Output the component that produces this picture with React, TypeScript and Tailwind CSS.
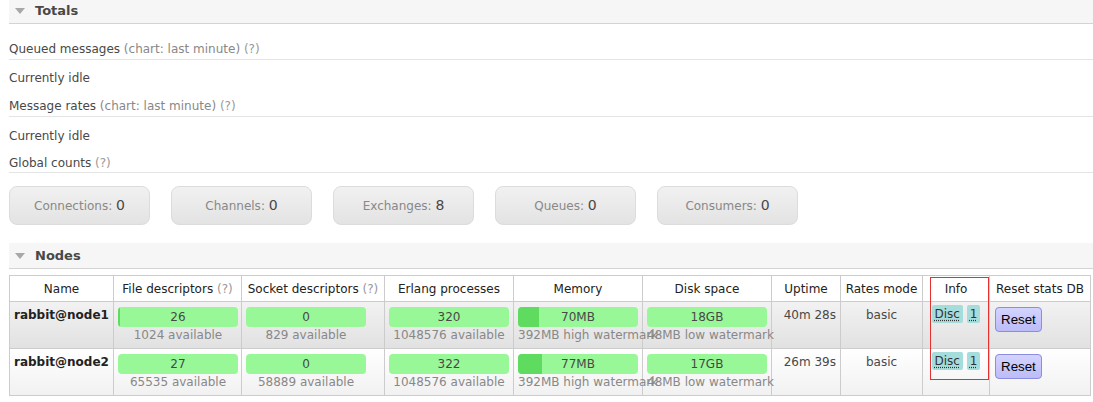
import React from 'react';

// Overview page: Totals + Nodes sections

const counts = [
  {label: 'Connections', value: 0},
  {label: 'Channels', value: 0},
  {label: 'Exchanges', value: 8},
  {label: 'Queues', value: 0},
  {label: 'Consumers', value: 0},
];

const nodes = [
  {
    name: 'rabbit@node1', fd: 26, fdAvail: '1024 available', fdUsed: 2,
    sd: 0, sdAvail: '829 available', proc: 320, procAvail: '1048576 available',
    mem: '70MB', memUsed: 21, disk: '18GB', uptime: '40m 28s',
    rowClass: 'bg-gradient-to-b from-[#f2f2f2] to-[#e1e1e1]',
  },
  {
    name: 'rabbit@node2', fd: 27, fdAvail: '65535 available', fdUsed: 0,
    sd: 0, sdAvail: '58889 available', proc: 322, procAvail: '1048576 available',
    mem: '77MB', memUsed: 24, disk: '17GB', uptime: '26m 39s',
    rowClass: 'bg-gradient-to-b from-[#ffffff] to-[#f1f1f1]',
  },
];

const Help = () => <span className="text-[#999]">(?)</span>;

const SectionHeader = ({title}: {title: string}) => (
  <div className="h-[26px] flex items-center bg-[#f6f6f6] border-b border-[#d4d4d4] pl-[6px]">
    <svg width="10" height="6" viewBox="0 0 10 6" className="mr-[10px]">
      <path d="M0 0 L10 0 L5 6 Z" fill="#a8a8a8"/>
    </svg>
    <span className="font-bold text-[13px] text-[#484848]">{title}</span>
  </div>
);

const Bar = ({value, used, sub}: {value: string | number; used: number; sub: string}) => (
  <div className="w-[120px]">
    <div className="relative h-[20px] rounded-[4px] bg-[#98f898] overflow-hidden">
      {used > 0 && <div className="absolute left-0 top-0 bottom-0 bg-[#5fdc5f]" style={{width: used}}/>}
      <div className="relative text-center leading-[20px] text-[#484848]">{value}</div>
    </div>
    <div className="text-center whitespace-nowrap text-[#888] leading-[17px]">{sub}</div>
  </div>
);

const Badge = ({text}: {text: string}) => (
  <span className="inline-block bg-[#a5dcdc] rounded-[2px] px-[3px] leading-[18px] text-[#333] underline decoration-dotted underline-offset-2">
    {text}
  </span>
);

const App = () => {
  return (
    <div className="w-[1093px] h-[402px] overflow-hidden bg-white text-[12px] text-[#484848] pl-[9px]"
         style={{fontFamily: '"DejaVu Sans", Verdana, sans-serif'}}>
      <div className="-mt-[2px]">
        <SectionHeader title="Totals"/>
      </div>

      <div className="h-[36px] flex items-end pb-[1px] border-b border-[#e4e4e4]">
        <span>Queued messages <span className="text-[#888]">(chart: last minute)</span> <Help/></span>
      </div>
      <div className="h-[36px] flex items-center">Currently idle</div>
      <div className="h-[21px] flex items-end pb-[1px] border-b border-[#e4e4e4]">
        <span>Message rates <span className="text-[#888]">(chart: last minute)</span> <Help/></span>
      </div>
      <div className="h-[38px] flex items-center">Currently idle</div>
      <div className="h-[18px] flex items-end border-b border-[#e4e4e4]">
        <span>Global counts <Help/></span>
      </div>

      <div className="flex gap-[21px] mt-[13px]">
        {counts.map((c, key) => (
          <div key={key}
               className="w-[141px] h-[39px] rounded-[8px] border border-[#dcdcdc] bg-gradient-to-b from-[#f1f1f1] to-[#e3e3e3] flex items-center justify-center">
            <span className="text-[#888]">{c.label}:&nbsp;</span>
            <span className="text-[14px] text-[#484848]">{c.value}</span>
          </div>
        ))}
      </div>

      <div className="mt-[18px]">
        <SectionHeader title="Nodes"/>
      </div>

      <div className="relative mt-[6px]">
        <table className="table-fixed border-collapse w-[1081px]">
          <colgroup>
            <col className="w-[104px]"/>
            <col className="w-[128px]"/>
            <col className="w-[143px]"/>
            <col className="w-[129px]"/>
            <col className="w-[129px]"/>
            <col className="w-[129px]"/>
            <col className="w-[69px]"/>
            <col className="w-[82px]"/>
            <col className="w-[67px]"/>
            <col className="w-[101px]"/>
          </colgroup>
          <thead>
            <tr className="h-[26px]">
              <th className="border border-[#cccccc] font-normal text-[#222]">Name</th>
              <th className="border border-[#cccccc] font-normal text-[#222] whitespace-nowrap">File descriptors <Help/></th>
              <th className="border border-[#cccccc] font-normal text-[#222] whitespace-nowrap">Socket descriptors <Help/></th>
              <th className="border border-[#cccccc] font-normal text-[#222]">Erlang processes</th>
              <th className="border border-[#cccccc] font-normal text-[#222]">Memory</th>
              <th className="border border-[#cccccc] font-normal text-[#222]">Disk space</th>
              <th className="border border-[#cccccc] font-normal text-[#222]">Uptime</th>
              <th className="border border-[#cccccc] font-normal text-[#222]">Rates mode</th>
              <th className="border border-[#cccccc] font-normal text-[#222]">Info</th>
              <th className="border border-[#cccccc] font-normal text-[#222] whitespace-nowrap">Reset stats DB</th>
            </tr>
          </thead>
          <tbody>
            {nodes.map((n, key) => (
              <tr key={key} className={`h-[47px] ${n.rowClass}`}>
                <td className="border border-[#cccccc] align-top px-[4px] pt-[5px] font-bold text-[#222] leading-[16px]">{n.name}</td>
                <td className="border border-[#cccccc] align-top px-[4px] pt-[5px]">
                  <Bar value={n.fd} used={n.fdUsed} sub={n.fdAvail}/>
                </td>
                <td className="border border-[#cccccc] align-top px-[4px] pt-[5px]">
                  <Bar value={n.sd} used={0} sub={n.sdAvail}/>
                </td>
                <td className="border border-[#cccccc] align-top px-[4px] pt-[5px]">
                  <Bar value={n.proc} used={0} sub={n.procAvail}/>
                </td>
                <td className="border border-[#cccccc] align-top px-[4px] pt-[5px]">
                  <Bar value={n.mem} used={n.memUsed} sub="392MB high watermark"/>
                </td>
                <td className="border border-[#cccccc] align-top px-[4px] pt-[5px]">
                  <Bar value={n.disk} used={0} sub="48MB low watermark"/>
                </td>
                <td className="border border-[#cccccc] align-top px-[4px] pt-[5px] text-right leading-[16px]">{n.uptime}</td>
                <td className="border border-[#cccccc] align-top px-[4px] pt-[5px] text-center leading-[16px]">basic</td>
                <td className="border border-[#cccccc] align-top px-[4px] pt-[3px] text-center whitespace-nowrap">
                  <Badge text="Disc"/> <Badge text="1"/>
                </td>
                <td className="border border-[#cccccc] align-top px-[5px] pt-[5px]">
                  <button
                    className="h-[25px] px-[5px] rounded-[4px] border border-[#8c8ce0] bg-gradient-to-b from-[#d4d4ff] to-[#bcbcf8] text-black text-[13.33px] leading-none"
                    style={{fontFamily: '"Liberation Sans", Arial, sans-serif'}}>
                    Reset
                  </button>
                </td>
              </tr>
            ))}
          </tbody>
        </table>
        {/* annotation box round the Info column */}
        <div className="absolute left-[921px] top-[2px] w-[59px] h-[103px] border border-[#e53030] pointer-events-none"/>
      </div>
    </div>
  );
};

export default App;
